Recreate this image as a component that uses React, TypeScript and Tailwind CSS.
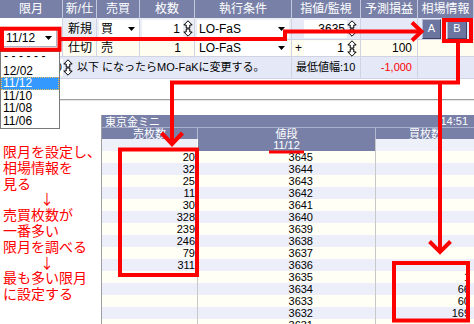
import React from "react";

const HEADERS = ["限月", "新/仕", "売買", "枚数", "執行条件", "指値/監視", "予測損益", "相場情報"];

const BOOK = [
  { sell: "20", price: "3645", buy: "" },
  { sell: "32", price: "3644", buy: "" },
  { sell: "25", price: "3643", buy: "" },
  { sell: "11", price: "3642", buy: "" },
  { sell: "30", price: "3641", buy: "" },
  { sell: "328", price: "3640", buy: "" },
  { sell: "239", price: "3639", buy: "" },
  { sell: "246", price: "3638", buy: "" },
  { sell: "79", price: "3637", buy: "" },
  { sell: "311", price: "3636", buy: "" },
  { sell: "", price: "3635", buy: "1" },
  { sell: "", price: "3634", buy: "66" },
  { sell: "", price: "3633", buy: "60" },
  { sell: "", price: "3632", buy: "169" },
  { sell: "", price: "3631", buy: "" },
];

const MONTHS = ["------", "12/02", "11/12", "11/10", "11/08", "11/06"];

const Caret = () => (
  <svg width="7" height="4" viewBox="0 0 7 4" className="shrink-0">
    <path d="M0 0H7L3.5 4Z" fill="#000" />
  </svg>
);

const Spin = () => (
  <svg width="10" height="17" viewBox="0 0 10 17" className="shrink-0">
    <path d="M5 0.8L9.2 5H6.8V8H3.2V5H0.8Z" fill="#fff" stroke="#000" strokeWidth="1" />
    <path d="M5 16.2L9.2 12H6.8V9H3.2V12H0.8Z" fill="#fff" stroke="#000" strokeWidth="1" />
  </svg>
);

const cell = "border-r border-b border-[#cfd3e3] flex items-center";

export default function App() {
  return (
    <div className="relative w-[474px] h-[324px] overflow-hidden bg-white font-['Liberation_Sans','Noto_Sans_CJK_JP',sans-serif] text-black">
      {/* order entry panel */}
      <div className="grid grid-cols-[63px_34px_43px_55px_97px_69px_57px_56px] grid-rows-[18px_22px_17px_22px] text-[12px] leading-none">
        {HEADERS.map((h) => (
          <div
            key={h}
            className="flex items-center justify-center bg-[#7880a8] text-white border-r border-[#c4c8dc] last:border-r-0"
          >
            {h}
          </div>
        ))}

        {/* row 1 */}
        <div className={`${cell} row-span-2 bg-white pl-[3px] pt-[1px]`}>
          <div className="w-[54px] h-[19px] bg-white border border-[#b0b4c4] flex items-center justify-between pl-[2px] pr-[4px]">
            <span>11/12</span>
            <Caret />
          </div>
        </div>
        <div className={`${cell} bg-[#eceef6] pl-[5px]`}>新規</div>
        <div className={`${cell} bg-[#eceef6] pl-[2px]`}>
          <div className="w-full h-[18px] bg-white flex items-center justify-between pl-[2px] pr-[4px]">
            <span>買</span>
            <Caret />
          </div>
        </div>
        <div className={`${cell} bg-[#eceef6] pl-[2px]`}>
          <div className="w-[41px] h-[18px] bg-white flex items-center justify-end pr-[3px]">1</div>
          <Spin />
        </div>
        <div className={`${cell} bg-[#eceef6] px-[2px]`}>
          <div className="w-full h-[18px] bg-white flex items-center justify-between pl-[2px] pr-[4px]">
            <span>LO-FaS</span>
            <Caret />
          </div>
        </div>
        <div className={`${cell} bg-[#e8ebf7] pl-[12px]`}>
          <div className="w-[43px] h-[18px] bg-white flex items-center justify-end pr-[2px]">3635</div>
          <Spin />
        </div>
        <div className={`${cell} bg-[#e6e9f7]`} />
        <div className="border-b border-[#cfd3e3] bg-[#e6e9f7] flex items-center pl-[4px] gap-[6px] text-[11px] text-white">
          <div className="w-[19px] h-[20px] bg-[#6c74a0] border border-t-[#b0b6d4] border-l-[#b0b6d4] border-b-[#3e4262] border-r-[#3e4262] flex items-center justify-center">
            A
          </div>
          <div className="w-[20px] h-[20px] bg-[#6c74a0] border border-t-[#b0b6d4] border-l-[#b0b6d4] border-b-[#3e4262] border-r-[#3e4262] flex items-center justify-center">
            B
          </div>
        </div>

        {/* row 2 */}
        <div className={`${cell} bg-[#fffcf0] pl-[5px]`}>仕切</div>
        <div className={`${cell} bg-[#fffcf0] pl-[4px]`}>売</div>
        <div className={`${cell} bg-[#fffcf0] justify-end pr-[13px]`}>1</div>
        <div className={`${cell} bg-[#fffcf0] px-[2px]`}>
          <div className="w-full h-[15px] bg-white flex items-center justify-between pl-[2px] pr-[4px]">
            <span>LO-FaS</span>
            <Caret />
          </div>
        </div>
        <div className={`${cell} bg-[#fffcf0] pl-[3px]`}>
          <span className="w-[9px]">+</span>
          <div className="w-[43px] h-[15px] bg-white flex items-center justify-end pr-[3px]">1</div>
          <Spin />
        </div>
        <div className={`${cell} bg-[#fffcf0] justify-end pr-[5px]`}>100</div>
        <div className="border-b border-[#cfd3e3] bg-[#fffcf0]" />

        {/* row 3 */}
        <div className={`${cell} col-span-5 bg-[#e4e8f7] text-[11px]`}>
          <div className="w-[60px] h-[17px] ml-[3px] bg-white flex items-center justify-end pr-[1px]">10</div>
          <Spin />
          <span className="ml-[4px]">以下 になったらMO-FaKに変更する。</span>
        </div>
        <div className={`${cell} bg-[#e4e8f7] text-[11px] pl-[4px]`}>最低値幅:10</div>
        <div className={`${cell} bg-[#e4e8f7] text-[11px] justify-end pr-[5px] text-[#ff0000]`}>-1,000</div>
        <div className="border-b border-[#cfd3e3] bg-[#e4e8f7]" />
      </div>

      {/* gap with separator */}
      <div className="h-[36px] pt-[20px]">
        <div className="h-[2px] border-t border-[#a0a0a0] border-b border-b-[#e4e4e4]" />
      </div>

      {/* lower area */}
      <div className="flex h-[209px]">
        <div className="w-[101px] shrink-0 pt-[29px] pl-[3px] font-['Noto_Sans_CJK_JP',sans-serif] text-[14px] leading-[15.8px] text-[#ff0000]">
          <div>限月を設定し、</div>
          <div>相場情報を</div>
          <div>見る</div>
          <div className="pl-[37px]">↓</div>
          <div>売買枚数が</div>
          <div>一番多い</div>
          <div>限月を調べる</div>
          <div className="pl-[37px]">↓</div>
          <div>最も多い限月</div>
          <div>に設定する</div>
        </div>

        <div className="flex-1 flex flex-col border-l border-[#a0a0a0] text-[11px] leading-[12px]">
          <div className="h-[12px] shrink-0 bg-[#7880a8] text-white flex justify-between pl-[3px] pr-[7px]">
            <span className="font-['Noto_Sans_CJK_JP',sans-serif]">東京金ミニ</span>
            <span>14:51</span>
          </div>
          <div className="grid grid-cols-[96px_178px_99px] h-[12px] shrink-0 bg-[#7880a8] text-white border-t border-[#aab0cc]">
            <div className="text-center border-r border-[#b4b9d2] font-['Noto_Sans_CJK_JP',sans-serif] leading-[11px]">売枚数</div>
            <div className="text-center border-r border-[#b4b9d2] font-['Noto_Sans_CJK_JP',sans-serif] leading-[11px]">値段</div>
            <div className="text-center font-['Noto_Sans_CJK_JP',sans-serif] leading-[11px]">買枚数</div>
          </div>
          <div className="grid grid-cols-[96px_178px_99px] h-[12px] shrink-0">
            <div className="bg-[#eef0fa] border-r border-b border-white" />
            <div className="bg-[#7880a8] text-white text-center border-r border-b border-[#c8c8c8]">11/12</div>
            <div className="bg-[#eef0fa] border-b border-[#c8c8c8]" />
          </div>
          {BOOK.map((r, i) => (
            <div
              key={r.price}
              className={`grid grid-cols-[96px_178px_99px] h-[12px] shrink-0 ${i % 2 === 0 ? "bg-[#fffff6]" : "bg-[#eceffa]"}`}
            >
              <div className="text-right pr-[2px] border-r border-b border-[#c8c8c8]">{r.sell}</div>
              <div className="text-right pr-[62px] border-r border-b border-[#c8c8c8]">{r.price}</div>
              <div className="text-right pr-[5px] border-b border-[#c8c8c8]">{r.buy}</div>
            </div>
          ))}
        </div>
      </div>

      {/* opened month list */}
      <div className="absolute left-0 top-[51px] w-[60px] bg-white border border-[#7a7a7a] text-[12px] leading-[12.5px] pb-[1px]">
        {MONTHS.map((m) => (
          <div
            key={m}
            className={
              m === "11/12"
                ? "h-[12.5px] pl-[2px] bg-[#3399ff] text-white outline-1 outline-dotted outline-[#f0c060] -outline-offset-1"
                : m === "------"
                ? "h-[12.5px] pl-[3px] tracking-[3.5px] leading-[9px] text-black"
                : "h-[12.5px] pl-[2px]"
            }
          >
            {m}
          </div>
        ))}
      </div>

      {/* red annotations */}
      <svg className="absolute inset-0 pointer-events-none" width="474" height="324" viewBox="0 0 474 324">
        <g fill="none" stroke="#ff0000" strokeWidth="4" strokeLinejoin="miter">
          <rect x="2" y="28.7" width="57.5" height="21" />
          <polyline points="60,39 285,39 285,31.5 420,31.5" />
          <polyline points="412,22.5 421.5,31.5 412,40.5" />
          <rect x="444" y="20" width="27" height="21" />
          <polyline points="458,41 458,82.5 172,82.5 172,144" />
          <polyline points="161.5,133 172,144 182.5,133" />
          <polyline points="440,82.5 440,252" />
          <polyline points="429.5,241.5 440,252 450.5,241.5" />
          <rect x="120" y="149.5" width="77" height="125.5" />
          <rect x="394" y="263" width="74" height="57.5" />
        </g>
        <line x1="269" y1="152" x2="304" y2="152" stroke="#ff0000" strokeWidth="3" />
      </svg>
    </div>
  );
}
